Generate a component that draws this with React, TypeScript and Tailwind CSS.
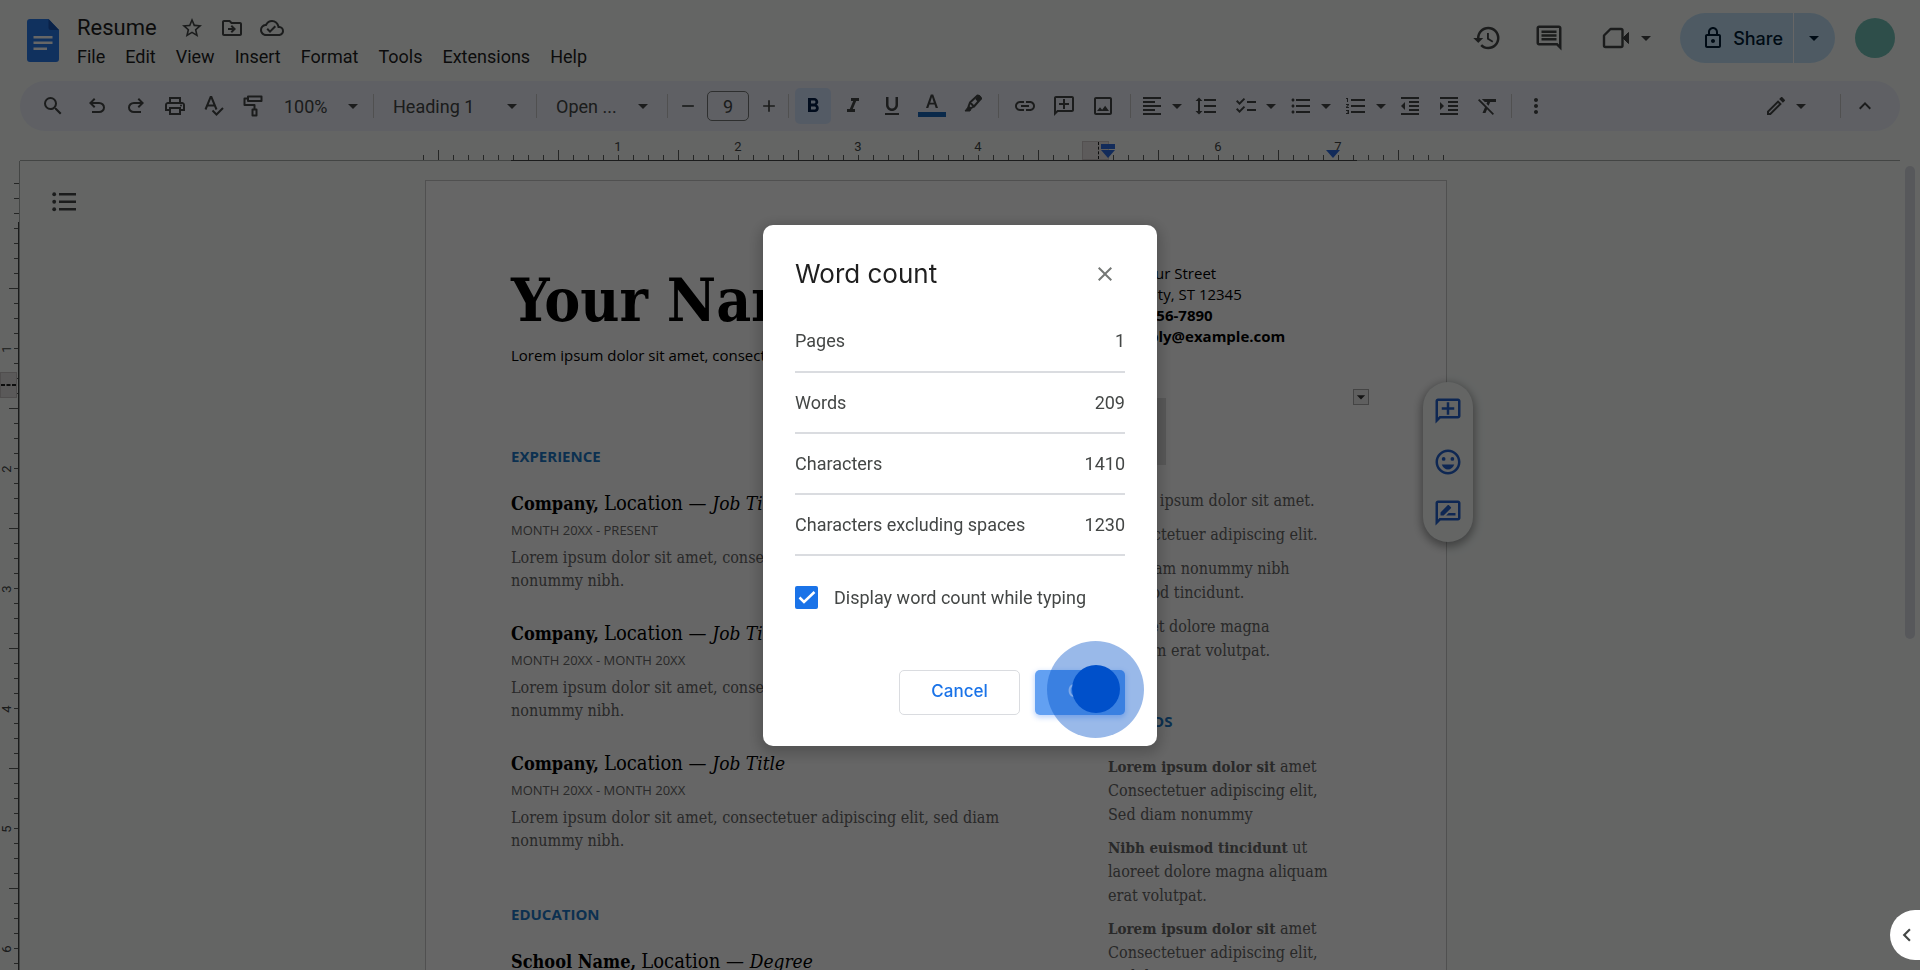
import type { ReactNode } from 'react';
import {
  MdAdd,
  MdArrowDropDown,
  MdChecklist,
  MdClose,
  MdFormatAlignLeft,
  MdFormatBold,
  MdFormatClear,
  MdFormatIndentDecrease,
  MdFormatIndentIncrease,
  MdFormatItalic,
  MdFormatLineSpacing,
  MdFormatListBulleted,
  MdFormatListNumbered,
  MdFormatUnderlined,
  MdHistory,
  MdKeyboardArrowLeft,
  MdKeyboardArrowUp,
  MdLink,
  MdMoreVert,
  MdOutlineAddComment,
  MdOutlineCloudDone,
  MdOutlineComment,
  MdOutlineDriveFileMove,
  MdOutlineEdit,
  MdOutlineEmojiEmotions,
  MdOutlineImage,
  MdOutlineLock,
  MdOutlinePrint,
  MdOutlineRateReview,
  MdRemove,
  MdSearch,
  MdStarBorder,
} from 'react-icons/md';

const SERIF = "font-['DejaVu_Serif_Condensed','DejaVu_Serif',serif]";
const OPEN = "font-['Open_Sans',sans-serif]";

/* ---------- Icons that the icon set lacks ---------- */

function UndoIcon() {
  return (
    <svg viewBox="0 -960 960 960" className="size-6" fill="currentColor" aria-hidden="true">
      <path d="M280-200v-80h284q63 0 109.5-40T720-420q0-60-46.5-100T564-560H312l104 104-56 56-200-200 200-200 56 56-104 104h252q97 0 166.5 63T800-420q0 94-69.5 157T564-200H280Z" />
    </svg>
  );
}

function RedoIcon() {
  return (
    <svg viewBox="0 -960 960 960" className="size-6" fill="currentColor" aria-hidden="true">
      <path d="M396-200q-97 0-166.5-63T160-420q0-94 69.5-157T396-640h252L544-744l56-56 200 200-200 200-56-56 104-104H396q-63 0-109.5 40T240-420q0 60 46.5 100T396-280h284v80H396Z" />
    </svg>
  );
}

function SpellIcon() {
  return (
    <svg viewBox="0 0 24 24" className="size-6" fill="none" stroke="currentColor" strokeWidth="2" aria-hidden="true">
      <path d="M3.5 15.500 8.600 3h.8l5.100 12.500M5.500 11.500h7" />
      <path d="m10.500 16.500 4 4 6.500-6.500" />
    </svg>
  );
}

function PaintIcon() {
  return (
    <svg viewBox="0 0 24 24" className="size-6" fill="none" stroke="currentColor" strokeWidth="2" strokeLinejoin="round" aria-hidden="true">
      <path d="M7 2.500h13.500v4.500H7zM7 4.500H3.500V11H13.500v4M11.500 15.500h4v6h-4z" />
    </svg>
  );
}

function MarkerIcon() {
  return (
    <svg viewBox="0 0 20 20" className="size-5" fill="none" stroke="currentColor" strokeWidth="2" strokeLinejoin="round" aria-hidden="true">
      <path d="m7 8.500 7.500-7q2 0 3.500 3L11 12.500z" />
      <path d="m13.500 5 2.500-3 2 2.500-3 2z" fill="currentColor" />
      <path d="m7 8.500-1.500 4 2 2 4-2.500" />
      <path d="m5.500 12.500-3.500 4.500h5l1-2z" fill="currentColor" strokeWidth="1" />
    </svg>
  );
}

function TextColorIcon() {
  return (
    <svg viewBox="0 0 28 28" className="size-7" aria-hidden="true">
      <path d="M12.800 2.500h2.400l4.800 13.500h-2.300l-1.200-3.400h-5l-1.200 3.400H8zM12.200 10.700h3.600L14.100 5.300h-.2z" fill="currentColor" />
      <path d="M0 20h28v5H0z" fill="#1b67b8" />
    </svg>
  );
}

function VideoIcon() {
  return (
    <svg viewBox="0 0 28 24" className="h-6 w-7" fill="none" stroke="currentColor" strokeWidth="2.400" strokeLinejoin="round" aria-hidden="true">
      <path d="M8.500 3H19a1.500 1.500 0 0 1 1.500 1.500v15A1.500 1.500 0 0 1 19 21H3.500A1.500 1.500 0 0 1 2 19.500V9.500z" />
      <path d="M21 12l5.500-5.500v11z" fill="currentColor" strokeWidth="1" />
    </svg>
  );
}

function OutlineIcon() {
  return (
    <svg viewBox="0 0 24 20" className="h-5 w-6" fill="currentColor" aria-hidden="true">
      <path d="M7 1h17v2.500H7zM7 8.500h17V11H7zM7 16h17v2.500H7z" />
      <circle cx="2.200" cy="2.250" r="1.900" />
      <circle cx="2.200" cy="9.750" r="1.900" />
      <circle cx="2.200" cy="17.250" r="1.900" />
    </svg>
  );
}

function DocsLogo() {
  return (
    <svg viewBox="0 0 32 43" className="h-[43px] w-8" aria-hidden="true">
      <path d="M3 0h18.500L32 11v29a3 3 0 0 1-3 3H3a3 3 0 0 1-3-3V3a3 3 0 0 1 3-3z" fill="#2a7bec" />
      <path d="M21.500 0 32 11H24a2.500 2.500 0 0 1-2.500-2.500z" fill="#1a56b4" />
      <path d="M6.500 17h19v2.500h-19zM6.500 22.500h19V25h-19zM6.500 28.500H20V31H6.500z" fill="#fff" />
    </svg>
  );
}

/* ---------- Header ---------- */

const MENUS = ['File', 'Edit', 'View', 'Insert', 'Format', 'Tools', 'Extensions', 'Help'];

function Header() {
  return (
    <header className="flex h-[81px] items-start justify-between pr-[25px] pl-[27px] text-[#444746]">
      <div className="flex">
        <div className="pt-[19px]">
          <DocsLogo />
        </div>
        <div className="pt-[11px] pl-[18px]">
          <div className="flex h-[33px] items-center gap-5">
            <h1 className="w-[83px] text-[22px] leading-8 text-[#1f1f1f]">Resume</h1>
            <div className="flex items-center gap-4">
              <button type="button" aria-label="Star">
                <MdStarBorder className="size-6" />
              </button>
              <button type="button" aria-label="Move">
                <MdOutlineDriveFileMove className="size-6" />
              </button>
              <button type="button" aria-label="Saved to cloud">
                <MdOutlineCloudDone className="size-6" />
              </button>
            </div>
          </div>
          <nav className="flex gap-5 text-[18px] leading-[26px] text-[#1f1f1f]">
            {MENUS.map((m) => (
              <button key={m} type="button">
                {m}
              </button>
            ))}
          </nav>
        </div>
      </div>
      <div className="flex items-center pt-[13px]">
        <button type="button" aria-label="Version history">
          <MdHistory className="size-[30px]" />
        </button>
        <button type="button" aria-label="Comments" className="ml-8">
          <MdOutlineComment className="size-[30px]" />
        </button>
        <button type="button" aria-label="Meet" className="ml-[38px] flex items-center">
          <VideoIcon />
          <MdArrowDropDown className="ml-1 size-6" />
        </button>
        <div className="ml-[22px] flex h-[50px] items-stretch overflow-hidden rounded-full bg-[#c2e2f8] text-[#001d35]">
          <button type="button" className="flex items-center gap-2 pr-[10px] pl-[21px] font-['Inter',sans-serif] text-[18px] font-medium">
            <MdOutlineLock className="size-6" />
            Share
          </button>
          <button type="button" aria-label="Share options" className="w-[42px] border-l border-white pl-2">
            <MdArrowDropDown className="size-6" />
          </button>
        </div>
        <button type="button" aria-label="Account" className="ml-5 size-10 rounded-full bg-[#73c4b8]" />
      </div>
    </header>
  );
}

/* ---------- Toolbar ---------- */

function Tool({ label, children }: { label: string; children: ReactNode }) {
  return (
    <button type="button" aria-label={label} className="flex h-9 w-[39px] items-center justify-center">
      {children}
    </button>
  );
}

function MenuTool({ label, children }: { label: string; children: ReactNode }) {
  return (
    <button type="button" aria-label={label} className="flex h-9 w-[55px] items-center pl-[9px]">
      {children}
      <MdArrowDropDown className="ml-px size-6 shrink-0" />
    </button>
  );
}

function Separator() {
  return <div className="h-6 w-px bg-[#c7c7c7]" />;
}

function PickList({ label, value, className }: { label: string; value: string; className: string }) {
  return (
    <div className={`flex items-center ${className}`}>
      <select aria-label={label} className="min-w-0 flex-1 appearance-none bg-transparent text-[18px] outline-none">
        <option>{value}</option>
      </select>
      <MdArrowDropDown className="size-6 shrink-0" />
    </div>
  );
}

function Toolbar() {
  return (
    <div className="mx-5 flex h-[50px] items-center justify-between rounded-full bg-[#edf0fa] text-[#444746]">
      <div className="flex items-center pl-[13px]">
        <Tool label="Search menus">
          <MdSearch className="size-6" />
        </Tool>
        <div className="flex pl-[5px]">
          <Tool label="Undo">
            <UndoIcon />
          </Tool>
          <Tool label="Redo">
            <RedoIcon />
          </Tool>
          <Tool label="Print">
            <MdOutlinePrint className="size-6" />
          </Tool>
          <Tool label="Spelling">
            <SpellIcon />
          </Tool>
          <Tool label="Paint format">
            <PaintIcon />
          </Tool>
        </div>
        <PickList label="Zoom" value="100%" className="w-[101px] pr-2 pl-3" />
        <Separator />
        <PickList label="Paragraph style" value="Heading 1" className="w-[162px] pr-3 pl-[19px]" />
        <Separator />
        <PickList label="Font" value="Open ..." className="w-[130px] pr-3 pl-[19px]" />
        <Separator />
        <Tool label="Decrease font size">
          <MdRemove className="size-5" />
        </Tool>
        <input
          aria-label="Font size"
          defaultValue="9"
          className="h-[30px] w-[42px] rounded-[5px] border border-[#747775] bg-transparent text-center text-[18px] outline-none"
        />
        <Tool label="Increase font size">
          <MdAdd className="size-5" />
        </Tool>
        <Separator />
        <div className="flex gap-[2px] px-[6px]">
          <button type="button" aria-label="Bold" className="flex h-9 w-9 items-center justify-center rounded-[5px] bg-[#d3e3fd] text-[#041e49]">
            <MdFormatBold className="size-6" />
          </button>
          <Tool label="Italic">
            <MdFormatItalic className="size-6" />
          </Tool>
          <button type="button" aria-label="Underline" className="flex h-9 w-9 items-center justify-center">
            <MdFormatUnderlined className="size-6" />
          </button>
          <Tool label="Text color">
            <TextColorIcon />
          </Tool>
          <button type="button" aria-label="Highlight color" className="flex h-9 w-[39px] items-center justify-center pb-1">
            <MarkerIcon />
          </button>
        </div>
        <Separator />
        <div className="flex pr-[8px] pl-[6px]">
          <Tool label="Insert link">
            <MdLink className="size-6" />
          </Tool>
          <Tool label="Add comment">
            <MdOutlineAddComment className="size-6 -scale-x-100" />
          </Tool>
          <Tool label="Insert image">
            <MdOutlineImage className="size-6" />
          </Tool>
        </div>
        <Separator />
        <MenuTool label="Align">
          <MdFormatAlignLeft className="size-6 shrink-0" />
        </MenuTool>
        <Tool label="Line spacing">
          <MdFormatLineSpacing className="size-6" />
        </Tool>
        <MenuTool label="Checklist">
          <MdChecklist className="size-6 shrink-0" />
        </MenuTool>
        <MenuTool label="Bulleted list">
          <MdFormatListBulleted className="size-6 shrink-0" />
        </MenuTool>
        <MenuTool label="Numbered list">
          <MdFormatListNumbered className="size-6 shrink-0" />
        </MenuTool>
        <div className="flex pr-1">
          <Tool label="Decrease indent">
            <MdFormatIndentDecrease className="size-6" />
          </Tool>
          <Tool label="Increase indent">
            <MdFormatIndentIncrease className="size-6" />
          </Tool>
          <Tool label="Clear formatting">
            <MdFormatClear className="size-6" />
          </Tool>
        </div>
        <Separator />
        <div className="pl-1">
          <Tool label="More">
            <MdMoreVert className="size-6" />
          </Tool>
        </div>
      </div>
      <div className="flex items-center pr-4">
        <MenuTool label="Editing mode">
          <MdOutlineEdit className="size-6 shrink-0" />
        </MenuTool>
        <div className="pl-[30px]">
          <Separator />
        </div>
        <div className="pl-1">
          <Tool label="Hide the menus">
            <MdKeyboardArrowUp className="size-6" />
          </Tool>
        </div>
      </div>
    </div>
  );
}

/* ---------- Rulers ---------- */

const H_TICKS = Array.from({ length: 69 }, (_, i) => i);
const V_TICKS = Array.from({ length: 53 }, (_, i) => i);

function HorizontalRuler() {
  return (
    <div className="mx-5 flex h-[30px] items-end justify-center border-b border-[#a9acab] pr-[39px]">
      <div className="relative flex h-full shrink-0 items-end">
        {H_TICKS.map((i) => {
          const inch = (i - 5) / 8;
          const label = Number.isInteger(inch) && inch > 0 && inch !== 5 ? inch : null;
          return (
            <div key={i} className="relative flex h-full w-[15px] shrink-0 items-end">
              <div className={i % 8 === 1 ? 'h-[10px] w-px bg-[#5c5f5e]' : 'h-[5px] w-px bg-[#5c5f5e]'} />
              {label && <span className="absolute top-2 -left-2 w-4 text-center text-[13px] leading-[16px] text-[#444746]">{label}</span>}
            </div>
          );
        })}
        <div className="absolute -bottom-px left-[88px] h-px w-[846px] bg-[#444746]" />
        <div className="absolute bottom-0 left-[659px] h-[19px] w-[27px] border border-[#d0c8c8] bg-[#e8e4e4]">
          <div className="ml-[15px] h-full w-px border-l border-dashed border-[#222]" />
        </div>
        <svg viewBox="0 0 14 14" className="absolute bottom-[2px] left-[678px] size-[14px]" aria-hidden="true">
          <path d="M0 0h14v5H0zM0 6h14l-7 8z" fill="#2f6ce0" />
        </svg>
        <svg viewBox="0 0 14 8" className="absolute bottom-[2px] left-[903px] h-2 w-[14px]" aria-hidden="true">
          <path d="M0 0h14L7 8z" fill="#2f6ce0" />
        </svg>
      </div>
    </div>
  );
}

function VerticalRuler() {
  return (
    <div className="relative w-5 shrink-0 overflow-hidden border-r border-[#a9acab] pt-[22px]">
      {V_TICKS.map((i) => {
        const inch = (i - 3) / 8;
        const label = Number.isInteger(inch) && inch > 0 ? inch : null;
        return (
          <div key={i} className="relative flex h-[15px] items-start justify-end">
            <div className={i % 8 === 7 ? 'h-px w-[10px] bg-[#5c5f5e]' : 'h-px w-[5px] bg-[#5c5f5e]'} />
            {label && (
              <span className="absolute -top-[6px] left-0 size-[14px] -rotate-90 text-center text-[13px] leading-[14px] text-[#444746]">{label}</span>
            )}
          </div>
        );
      })}
      <div className="absolute top-[61px] right-0 bottom-0 w-px bg-[#444746]" />
      <div className="absolute top-[211px] left-0 flex h-[26px] w-[17px] items-center border border-[#c8c4c4] bg-[#e0dede]">
        <svg viewBox="0 0 15 2" className="h-[2px] w-[15px]" aria-hidden="true">
          <path d="M0 1h15" stroke="#222" strokeWidth="2" strokeDasharray="4 1.500" />
        </svg>
      </div>
    </div>
  );
}

/* ---------- Document ---------- */

function Job({ name, title, dates }: { name: string; title: string; dates: string }) {
  return (
    <section className="h-[130px]">
      <h3 className="text-[18px] leading-6 text-black">
        <b>{name},</b>{' '}
        <span className="text-[20px]">
          Location — <i className="text-[19px]">{title}</i>
        </span>
      </h3>
      <p className={`${OPEN} pt-[2px] text-[13px] leading-6 text-[#666]`}>{dates}</p>
      <p className="pt-1 text-[16px] leading-[23px] text-[#666]">
        Lorem ipsum dolor sit amet, consectetuer adipiscing elit, sed diam
        <br />
        nonummy nibh.
      </p>
    </section>
  );
}

function SectionTitle({ children }: { children: ReactNode }) {
  return <h2 className={`${OPEN} text-[15px] leading-5 font-bold text-[#2079c7]`}>{children}</h2>;
}

function Lead({ children }: { children: ReactNode }) {
  return <b className="text-[15px] leading-6">{children}</b>;
}

function Page() {
  return (
    <article className={`${SERIF} relative flex w-[1022px] shrink-0 items-start border border-[#c7c7c7] bg-white pl-[85px]`}>
      <div className="w-[597px] shrink-0">
        <h1 className="pt-[81px] text-[60px] leading-[76px] font-bold text-black">Your Name</h1>
        <p className={`${OPEN} pt-[5px] text-[15px] leading-6 text-black`}>Lorem ipsum dolor sit amet, consectetuer adipiscing elit</p>
        <div className="pt-[79px]">
          <SectionTitle>EXPERIENCE</SectionTitle>
        </div>
        <div className="pt-[25px]">
          <Job name="Company" title="Job Title" dates="MONTH 20XX - PRESENT" />
          <Job name="Company" title="Job Title" dates="MONTH 20XX - MONTH 20XX" />
          <Job name="Company" title="Job Title" dates="MONTH 20XX - MONTH 20XX" />
        </div>
        <div className="pt-[23px]">
          <SectionTitle>EDUCATION</SectionTitle>
        </div>
        <div className="pt-[25px]">
          <Job name="School Name" title="Degree" dates="MONTH 20XX - MONTH 20XX" />
        </div>
      </div>
      <div className="pt-[82px] text-[16px] leading-6 text-[#666]">
        <address className={`${OPEN} text-[15px] leading-[21px] text-black not-italic`}>
          123 Your Street
          <br />
          Your City, ST 12345
          <br />
          <b>(123) 456-7890</b>
          <br />
          <b>no_reply@example.com</b>
        </address>
        <div className="mt-[51px] h-[67px] w-[58px] bg-[#dedede]" />
        <div className="space-y-[10px] pt-6">
          <p>Lorem ipsum dolor sit amet.</p>
          <p>Consectetuer adipiscing elit.</p>
          <p>
            Sed diam nonummy nibh
            <br />
            euismod tincidunt.
          </p>
          <p>
            Laoreet dolore magna
            <br />
            aliquam erat volutpat.
          </p>
        </div>
        <div className="pt-12 pb-6">
          <SectionTitle>AWARDS</SectionTitle>
        </div>
        <div className="space-y-[9px]">
          <p>
            <Lead>Lorem ipsum dolor sit</Lead> amet
            <br />
            Consectetuer adipiscing elit,
            <br />
            Sed diam nonummy
          </p>
          <p>
            <Lead>Nibh euismod tincidunt</Lead> ut
            <br />
            laoreet dolore magna aliquam
            <br />
            erat volutpat.
          </p>
          <p>
            <Lead>Lorem ipsum dolor sit</Lead> amet
            <br />
            Consectetuer adipiscing elit,
            <br />
            Sed diam nonummy
          </p>
        </div>
      </div>
      <button
        type="button"
        aria-label="Table options"
        className="absolute top-[208px] left-[927px] flex size-4 items-center justify-center border border-[#aaa] bg-[#eee] text-[#333]"
      >
        <MdArrowDropDown className="size-5 shrink-0" />
      </button>
      <div className="absolute top-[201px] -right-[27px] flex h-[160px] w-[50px] flex-col items-center justify-around rounded-full bg-[#f9fdfb] py-1 text-[#2463cf] shadow-[0_3px_8px_2px_rgba(0,0,0,0.35)]">
        <button type="button" aria-label="Comment on selection">
          <MdOutlineAddComment className="size-[30px] -scale-x-100" />
        </button>
        <button type="button" aria-label="Add emoji reaction">
          <MdOutlineEmojiEmotions className="size-[30px]" />
        </button>
        <button type="button" aria-label="Suggest edits">
          <MdOutlineRateReview className="size-[30px]" />
        </button>
      </div>
    </article>
  );
}

/* ---------- Dialog ---------- */

const COUNTS = [
  { label: 'Pages', value: '1' },
  { label: 'Words', value: '209' },
  { label: 'Characters', value: '1410' },
  { label: 'Characters excluding spaces', value: '1230' },
];

function WordCountDialog() {
  return (
    <div className="fixed inset-0 flex items-center justify-center bg-black/60">
      <div
        role="dialog"
        aria-labelledby="word-count-title"
        className="w-[394px] rounded-[10px] bg-white px-8 pt-[31px] pb-[31px] text-[18px] text-[#444746] shadow-[0_4px_14px_4px_rgba(0,0,0,0.2)]"
      >
        <div className="flex items-center justify-between">
          <h2 id="word-count-title" className="font-['Inter',sans-serif] text-[26px] leading-9 text-[#1f1f1f]">
            Word count
          </h2>
          <button type="button" aria-label="Close" className="mr-2 text-[#747775]">
            <MdClose className="size-6" />
          </button>
        </div>
        <table className="mt-[19px] w-full border-collapse">
          <tbody>
            {COUNTS.map((c) => (
              <tr key={c.label} className="h-[61px] border-b-2 border-[#dadce0]">
                <th scope="row" className="text-left font-normal">
                  {c.label}
                </th>
                <td className="text-right">{c.value}</td>
              </tr>
            ))}
          </tbody>
        </table>
        <div className="mt-[28px] flex items-center gap-4">
          <span className="relative flex size-[23px] items-center justify-center">
            <input id="live-count" type="checkbox" defaultChecked className="absolute inset-0 size-[23px] appearance-none rounded-[2px] bg-[#1a73e8]" />
            <svg viewBox="0 0 18 18" className="pointer-events-none relative size-[18px]" fill="none" stroke="#fff" strokeWidth="2.500" aria-hidden="true">
              <path d="m1.500 9.500 4.500 4.500L16.500 4" />
            </svg>
          </span>
          <label htmlFor="live-count">Display word count while typing</label>
        </div>
        <div className="relative mt-[59px] flex justify-end gap-[15px] font-['Inter',sans-serif] text-[17px] font-medium">
          <button type="button" className="h-[45px] w-[121px] rounded-[5px] border border-[#dadce0] text-[#1a73e8]">
            Cancel
          </button>
          <button type="button" className="h-[45px] w-[90px] rounded-[5px] bg-[#62a0f2] text-[#d2e4fc] shadow-[0_2px_5px_1px_rgba(66,133,244,0.3)]">
            OK
          </button>
          <div className="pointer-events-none absolute -top-[29px] -right-[19px] flex size-[97px] items-center justify-center rounded-full bg-[#0050c8]/40">
            <div className="size-12 rounded-full bg-[#0050ca]" />
          </div>
        </div>
      </div>
    </div>
  );
}

export default function App() {
  return (
    <div className="flex h-screen flex-col overflow-hidden bg-[#f9fdfb] font-['Roboto',sans-serif]">
      <Header />
      <Toolbar />
      <HorizontalRuler />
      <main className="flex min-h-0 flex-1">
        <VerticalRuler />
        <div className="relative flex min-w-0 flex-1 items-start justify-center overflow-hidden pt-[19px] pr-[68px]">
          <Page />
          <button type="button" aria-label="Show document outline" className="absolute top-[31px] left-8 text-[#444746]">
            <OutlineIcon />
          </button>
          <div className="absolute top-[5px] right-[5px] h-[473px] w-[10px] rounded-full bg-[#dadce3]" />
        </div>
      </main>
      <WordCountDialog />
      <button
        type="button"
        aria-label="Show side panel"
        className="fixed right-0 bottom-[10px] flex h-[50px] w-[30px] items-center rounded-l-full bg-white pl-1 text-[#444746]"
      >
        <MdKeyboardArrowLeft className="size-7" />
      </button>
    </div>
  );
}
